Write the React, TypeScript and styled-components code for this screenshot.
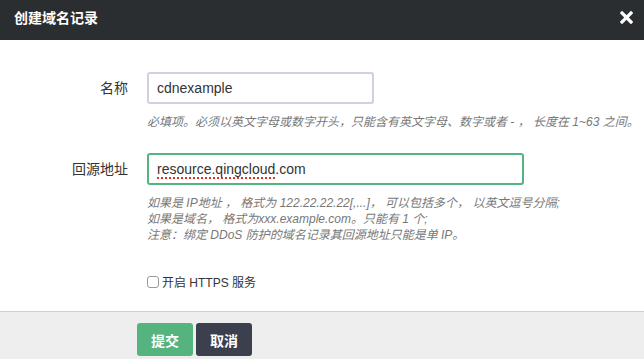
import type { FC } from "react";
import styled, { createGlobalStyle } from "styled-components";

const GlobalStyle = createGlobalStyle`
  html, body {
    margin: 0;
    padding: 0;
    background: #ffffff;
  }
  body {
    font-family: "Liberation Sans", "Noto Sans CJK SC", sans-serif;
    color: #333333;
  }
`;

const Dialog = styled.div`
  width: 644px;
  height: 359px;
  display: flex;
  flex-direction: column;
  background: #ffffff;
  overflow: hidden;
`;

const Header = styled.div`
  height: 40px;
  flex: none;
  display: flex;
  align-items: center;
  justify-content: space-between;
  padding: 0 11px 0 14px;
  background: #2a2e30;
  color: #ffffff;
  .title {
    font-size: 14px;
    font-weight: 700;
    margin-top: -6px;
  }
  .close {
    display: flex;
    margin-top: -6px;
  }
`;

const Body = styled.div`
  flex: 1;
  padding-top: 32px;
`;

const Row = styled.div<{ $gap?: number }>`
  display: flex;
  align-items: flex-start;
  margin-bottom: ${(p) => p.$gap ?? 0}px;
`;

const Label = styled.div`
  width: 128px;
  flex: none;
  height: 32px;
  line-height: 32px;
  text-align: right;
  font-size: 14px;
  color: #333333;
  margin-right: 19px;
`;

const Control = styled.div`
  display: flex;
  flex-direction: column;
`;

const Field = styled.div<{ $width: number; $active?: boolean }>`
  width: ${(p) => p.$width}px;
  height: 32px;
  box-sizing: border-box;
  border: 2px solid ${(p) => (p.$active ? "#55b37f" : "#d2d0e0")};
  border-radius: 3px;
  padding: 0 8px;
  line-height: 28px;
  font-size: 14px;
  color: #333333;
  white-space: nowrap;
  .typo {
    text-decoration: underline dotted #e0302a;
    text-decoration-thickness: 2px;
    text-underline-offset: 3px;
  }
`;

const Help = styled.div`
  margin-top: 10px;
  font-size: 12px;
  line-height: 16px;
  font-style: italic;
  color: #777777;
  white-space: nowrap;
`;

const Check = styled.label`
  display: flex;
  align-items: center;
  gap: 3px;
  margin-left: 147px;
  font-size: 12px;
  color: #333333;
  input {
    appearance: none;
    margin: 0;
    width: 12px;
    height: 12px;
    border: 1px solid #9a9a9a;
    border-radius: 3px;
    background: #ffffff;
  }
`;

const Footer = styled.div`
  height: 48px;
  flex: none;
  box-sizing: border-box;
  border-top: 1px solid #cfcdd8;
  background: #eeeeee;
  display: flex;
  gap: 3px;
  padding: 11px 0 0 137px;
`;

const Button = styled.button<{ $kind: "primary" | "dark" }>`
  width: 56px;
  height: 33px;
  border: none;
  border-radius: 3px;
  background: ${(p) => (p.$kind === "primary" ? "#55b37f" : "#3c3f4e")};
  color: #ffffff;
  font-family: inherit;
  font-size: 14px;
  font-weight: 700;
  padding: 0;
`;

const App: FC = () => {
  return (
    <Dialog>
      <GlobalStyle />
      <Header>
        <span className="title">创建域名记录</span>
        <span className="close">
          <svg width="13" height="13" viewBox="0 0 13 13">
            <path d="M2 2 L11 11 M11 2 L2 11" stroke="#ffffff" strokeWidth="3.2" strokeLinecap="square" />
          </svg>
        </span>
      </Header>
      <Body>
        <Row $gap={23}>
          <Label>名称</Label>
          <Control>
            <Field $width={227}>cdnexample</Field>
            <Help>必填项。必须以英文字母或数字开头，只能含有英文字母、数字或者 - ， 长度在 1~63 之间。</Help>
          </Control>
        </Row>
        <Row $gap={30}>
          <Label>回源地址</Label>
          <Control>
            <Field $width={377} $active>
              <span className="typo">resource.qingcloud</span>.com
            </Field>
            <Help>
              如果是 IP地址 ， 格式为 122.22.22.22[,...]， 可以包括多个， 以英文逗号分隔;
              <br />
              如果是域名， 格式为xxx.example.com。只能有 1 个;
              <br />
              注意：绑定 DDoS 防护的域名记录其回源地址只能是单 IP。
            </Help>
          </Control>
        </Row>
        <Check>
          <input type="checkbox" />
          开启 HTTPS 服务
        </Check>
      </Body>
      <Footer>
        <Button $kind="primary">提交</Button>
        <Button $kind="dark">取消</Button>
      </Footer>
    </Dialog>
  );
};

export default App;
